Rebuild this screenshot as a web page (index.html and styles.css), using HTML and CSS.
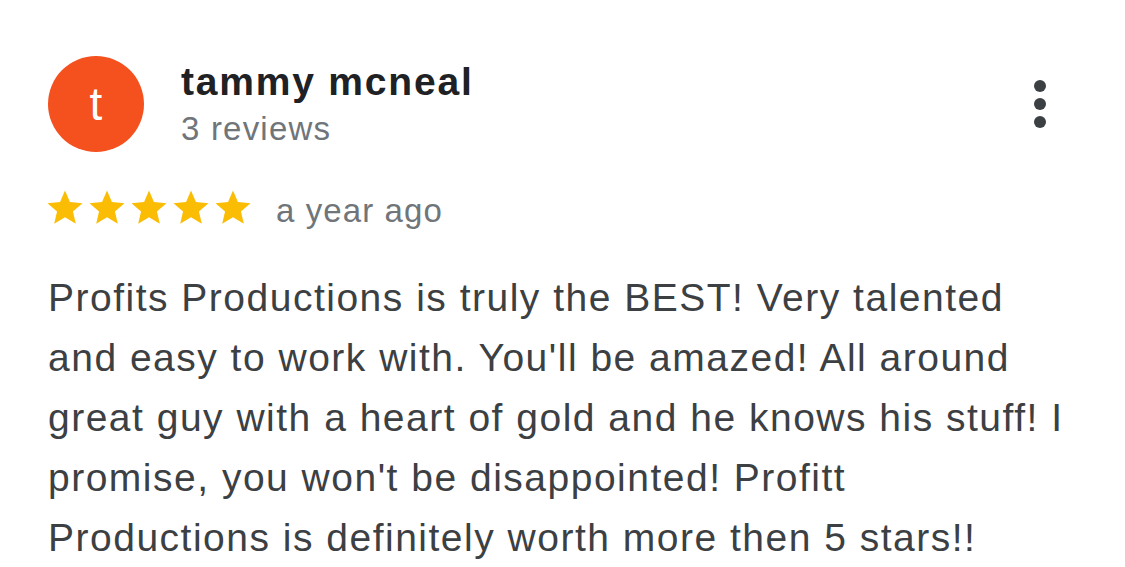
FILE: index.html
```html
<!DOCTYPE html>
<html>
<head>
<meta charset="utf-8">
<link rel="stylesheet" href="styles.css">
</head>
<body>
<div class="review">
  <div class="header">
    <div class="avatar">t</div>
    <div class="who">
      <div class="name">tammy mcneal</div>
      <div class="count">3 reviews</div>
    </div>
    <div class="more">
      <span class="dot"></span><span class="dot"></span><span class="dot"></span>
    </div>
  </div>
  <div class="meta">
    <div class="stars">
      <svg viewBox="0 0 24 24"><path d="M12 17.27L18.18 21l-1.64-7.03L22 9.24l-7.19-.61L12 2 9.19 8.63 2 9.24l5.46 4.73L5.82 21z"/></svg>
      <svg viewBox="0 0 24 24"><path d="M12 17.27L18.18 21l-1.64-7.03L22 9.24l-7.19-.61L12 2 9.19 8.63 2 9.24l5.46 4.73L5.82 21z"/></svg>
      <svg viewBox="0 0 24 24"><path d="M12 17.27L18.18 21l-1.64-7.03L22 9.24l-7.19-.61L12 2 9.19 8.63 2 9.24l5.46 4.73L5.82 21z"/></svg>
      <svg viewBox="0 0 24 24"><path d="M12 17.27L18.18 21l-1.64-7.03L22 9.24l-7.19-.61L12 2 9.19 8.63 2 9.24l5.46 4.73L5.82 21z"/></svg>
      <svg viewBox="0 0 24 24"><path d="M12 17.27L18.18 21l-1.64-7.03L22 9.24l-7.19-.61L12 2 9.19 8.63 2 9.24l5.46 4.73L5.82 21z"/></svg>
    </div>
    <span class="when">a year ago</span>
  </div>
  <p class="text">Profits Productions is truly the BEST! Very talented<br>and easy to work with. You'll be amazed! All around<br>great guy with a heart of gold and he knows his stuff! I<br>promise, you won't be disappointed! Profitt<br>Productions is definitely worth more then 5 stars!!</p>
</div>
</body>
</html>
```
FILE: styles.css
```css
html, body {
  margin: 0;
  padding: 0;
  background: #ffffff;
}
body {
  font-family: "Liberation Sans", Arial, sans-serif;
  width: 1125px;
  height: 567px;
  overflow: hidden;
}
.review {
  padding: 56px 0 0 48px;
}
.header {
  display: flex;
  align-items: flex-start;
}
.avatar {
  width: 96px;
  height: 96px;
  border-radius: 50%;
  background: #f4511e;
  color: #fff;
  font-size: 46px;
  line-height: 96px;
  text-align: center;
  flex: none;
}
.who {
  margin-left: 37px;
  flex: 1;
}
.name {
  font-size: 39px;
  font-weight: bold;
  color: #202124;
  line-height: 44px;
  margin-top: 4px;
  letter-spacing: 1.8px;
}
.count {
  font-size: 33px;
  color: #70757a;
  line-height: 40px;
  margin-top: 5px;
  letter-spacing: 1.2px;
}
.more {
  width: 14px;
  margin: 24px 77px 0 0;
  display: flex;
  flex-direction: column;
  gap: 6px;
}
.dot {
  width: 12px;
  height: 12px;
  border-radius: 50%;
  background: #3c4043;
}
.meta {
  display: flex;
  align-items: center;
  margin-top: 34px;
  margin-left: -4px;
}
.stars {
  display: flex;
}
.stars svg {
  width: 42px;
  height: 42px;
  fill: #fbbc04;
}
.when {
  margin-left: 22px;
  margin-top: 6px;
  font-size: 33px;
  color: #70757a;
  letter-spacing: 1.1px;
}
.text {
  margin: 38px 0 0 0;
  font-size: 39px;
  line-height: 60px;
  color: #3c4043;
  letter-spacing: 1.5px;
  white-space: nowrap;
}
```
